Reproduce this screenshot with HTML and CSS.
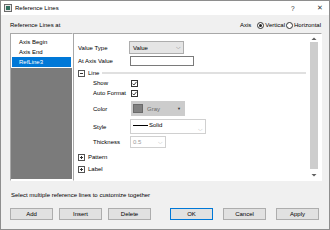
FILE: index.html
```html
<!DOCTYPE html>
<html>
<head>
<meta charset="utf-8">
<link rel="stylesheet" href="styles.css">
</head>
<body>
<div class="window">
  <div class="titlebar">
    <svg class="app-icon" width="8" height="8" viewBox="0 0 8 8"><rect x="0.5" y="0.5" width="7" height="7" fill="#e8e8e8" stroke="#6a6a6a"/><rect x="2" y="2" width="4" height="4" fill="#2f6f5f"/></svg>
    <span class="title">Reference Lines</span>
    <span class="spacer"></span>
    <span class="tb-help">?</span>
    <span class="tb-close">✕</span>
  </div>
  <div class="content">
    <div class="top-row">
      <span>Reference Lines at</span>
      <div class="axis">
        <span class="axis-label">Axis</span>
        <span class="radio checked"></span><span class="rlabel">Vertical</span>
        <span class="radio"></span><span class="rlabel">Horizontal</span>
      </div>
    </div>
    <div class="main">
      <div class="list">
        <div class="item">Axis Begin</div>
        <div class="item">Axis End</div>
        <div class="item selected">RefLine3</div>
        <div class="filler"></div>
      </div>
      <div class="panel">
        <div class="props">
          <div class="row r-value">
            <span class="label">Value Type</span>
            <div class="select sel-value"><span>Value</span><span class="chev">⌵</span></div>
          </div>
          <div class="row r-axis">
            <span class="label">At Axis Value</span>
            <div class="input"></div>
          </div>
          <div class="row group">
            <svg class="tog" width="7" height="7" viewBox="0 0 7 7"><rect x="0.5" y="0.5" width="6" height="6" fill="#fff" stroke="#555"/><path d="M2 3.5H5" stroke="#333"/></svg>
            <span class="gtitle">Line</span>
            <span class="gline"></span>
          </div>
          <div class="row sub r-check">
            <span class="label">Show</span>
            <svg width="7" height="7" viewBox="0 0 7 7"><rect x="0.5" y="0.5" width="6" height="6" fill="#fff" stroke="#333"/><path d="M1.5 3.6L2.9 5L5.6 1.8" fill="none" stroke="#222" stroke-width="0.9"/></svg>
          </div>
          <div class="row sub r-check">
            <span class="label">Auto Format</span>
            <svg width="7" height="7" viewBox="0 0 7 7"><rect x="0.5" y="0.5" width="6" height="6" fill="#fff" stroke="#333"/><path d="M1.5 3.6L2.9 5L5.6 1.8" fill="none" stroke="#222" stroke-width="0.9"/></svg>
          </div>
          <div class="row sub r-color">
            <span class="label">Color</span>
            <div class="select sel-color"><span class="swatch"></span><span class="ctext">Gray</span><span class="tri">▼</span></div>
          </div>
          <div class="row sub r-style">
            <span class="label">Style</span>
            <div class="select sel-style"><span class="linesample"></span><span>Solid</span><span class="chev light">⌵</span></div>
          </div>
          <div class="row sub r-thick">
            <span class="label">Thickness</span>
            <div class="select sel-thick"><span class="gtext">0.5</span><span class="chev light">⌵</span></div>
          </div>
          <div class="row group r-pattern">
            <svg class="tog" width="7" height="7" viewBox="0 0 7 7"><rect x="0.5" y="0.5" width="6" height="6" fill="#fff" stroke="#555"/><path d="M2 3.5H5M3.5 2V5" stroke="#333"/></svg>
            <span class="gtitle">Pattern</span>
          </div>
          <div class="row group">
            <svg class="tog" width="7" height="7" viewBox="0 0 7 7"><rect x="0.5" y="0.5" width="6" height="6" fill="#fff" stroke="#555"/><path d="M2 3.5H5M3.5 2V5" stroke="#333"/></svg>
            <span class="gtitle">Label</span>
          </div>
        </div>
        <div class="scrollbar">
          <svg width="8" height="5" viewBox="0 0 8 5"><path d="M1.5 4L4 1.5L6.5 4Z" fill="#606060"/></svg>
          <div class="thumb"></div>
          <svg width="8" height="5" viewBox="0 0 8 5"><path d="M1.5 1L4 3.5L6.5 1Z" fill="#606060"/></svg>
        </div>
      </div>
    </div>
    <div class="hint">Select multiple reference lines to customize together</div>
    <div class="buttons">
      <div class="bgroup left">
        <div class="btn">Add</div>
        <div class="btn">Insert</div>
        <div class="btn">Delete</div>
      </div>
      <div class="bgroup right">
        <div class="btn default">OK</div>
        <div class="btn">Cancel</div>
        <div class="btn">Apply</div>
      </div>
    </div>
  </div>
</div>
</body>
</html>
```
FILE: styles.css
```css
* { box-sizing: border-box; }
html, body { margin: 0; padding: 0; background: #f0f0f0; }
body {
  font-family: "Liberation Sans", Arial, sans-serif;
  font-size: 6px;
  color: #000;
}
.window {
  width: 330px;
  height: 230px;
  border: 1px solid #8e8e8e;
  background: #f0f0f0;
  display: flex;
  flex-direction: column;
}
.titlebar {
  height: 14px;
  background: #fff;
  display: flex;
  align-items: center;
  padding-left: 3px;
}
.app-icon { margin-right: 3px; }
.title { font-size: 6px; }
.spacer { flex: 1; }
.tb-help { width: 10px; margin-right: 16px; font-size: 6.5px; color: #333; }
.tb-close { width: 12px; font-size: 7px; color: #333; }
.content {
  flex: 1;
  padding: 0 7px 0 9px;
  display: flex;
  flex-direction: column;
}
.top-row {
  height: 18px;
  padding-top: 2px;
  display: flex;
  align-items: center;
  justify-content: space-between;
}
.axis { display: flex; align-items: center; padding-right: 0; }
.axis-label { margin-right: 6px; }
.rlabel { margin-right: 1px; }
.radio {
  width: 7px; height: 7px;
  border: 1px solid #333;
  border-radius: 50%;
  background: #fff;
  margin-right: 1px;
  display: flex; align-items: center; justify-content: center;
}
.radio.checked::after {
  content: "";
  width: 3px; height: 3px;
  border-radius: 50%;
  background: #222;
}
.main {
  height: 148px;
  display: flex;
}
.list {
  width: 63px;
  border: 1px solid #a8a8a8;
  border-right-color: #fff;
  border-bottom-color: #fff;
  background: #fff;
  padding: 3px 1px 1px 1px;
  display: flex;
  flex-direction: column;
}
.item {
  height: 10px;
  line-height: 10px;
  padding-left: 7px;
}
.item.selected { background: #0078d7; color: #fff; }
.filler { flex: 1; background: #7b7b7b; margin: 1px -1px 0 -1px; }
.panel {
  flex: 1;
  border: 1px solid #a8a8a8;
  border-right-color: #fff;
  border-bottom-color: #fff;
  background: #fff;
  display: flex;
}
.props {
  flex: 1;
  padding: 7px 0 0 4px;
  display: flex;
  flex-direction: column;
}
.row { display: flex; align-items: center; height: 10px; }
.label { width: 52px; flex: none; }
.sub { padding-left: 15px; }
.sub .label { width: 37px; }
.r-value { height: 13px; margin-bottom: 2px; }
.r-axis { height: 10px; }
.group { margin-top: 2px; }
.tog { margin-right: 3px; flex: none; }
.gtitle { margin-right: 3px; }
.gline { flex: 1; height: 2px; background: #e0e0e0; margin-right: 4px; }
.r-check svg { margin-left: 1px; }
.r-color { height: 15px; margin-top: 3px; }
.r-style { height: 15px; margin-top: 3px; }
.r-thick { height: 12px; margin-top: 2px; }
.r-pattern { margin-top: 4px; }
.select {
  display: flex;
  align-items: center;
  height: 100%;
}
.chev { margin-left: auto; font-size: 6px; color: #666; padding-right: 2px; }
.chev.light { color: #aaa; }
.sel-value {
  width: 55px;
  margin-left: -1px;
  background: #e5e5e5;
  border: 1px solid #adadad;
  padding-left: 3px;
}
.input {
  width: 64px;
  height: 100%;
  border: 1px solid #7a7a7a;
  background: #fff;
}
.sel-color {
  width: 54px;
  margin-left: 1px;
  background: #cccccc;
  padding-left: 2px;
}
.swatch {
  width: 10px; height: 9px;
  background: #808080;
  border: 1px solid #6a6a6a;
  margin-right: 4px;
}
.ctext { color: #6a6a6a; }
.tri { margin-left: auto; font-size: 4px; color: #333; padding-right: 4px; }
.sel-style {
  width: 76px;
  border: 1px solid #d0d0d0;
  background: #fff;
  padding-left: 2px;
  align-items: flex-start;
  padding-top: 2px;
}
.sel-style .chev { align-self: center; margin-top: 3px; }
.linesample {
  width: 15px; height: 1px; background: #000; margin-top: 3px; margin-right: 1px;
}
.sel-thick {
  width: 36px;
  border: 1px solid #d0d0d0;
  background: #fff;
  padding-left: 2px;
}
.gtext { color: #9a9a9a; }
.scrollbar {
  width: 8px;
  margin: 2px 3px 2px 0;
  display: flex;
  flex-direction: column;
  align-items: center;
}
.scrollbar svg { flex: none; }
.thumb { width: 8px; flex: 1; background: #cdcdcd; margin: 1px 0 4px 0; }
.hint { margin-top: 10px; height: 8px; line-height: 8px; padding-left: 1px; }
.buttons {
  margin-top: 9px;
  display: flex;
  justify-content: space-between;
  padding-right: 3px;
}
.bgroup { display: flex; }
.bgroup.left { gap: 6px; }
.bgroup.right { gap: 10px; }
.btn {
  width: 43px;
  height: 12px;
  background: #e1e1e1;
  border: 1px solid #adadad;
  display: flex;
  align-items: center;
  justify-content: center;
}
.btn.default { border-color: #0078d7; }
```
